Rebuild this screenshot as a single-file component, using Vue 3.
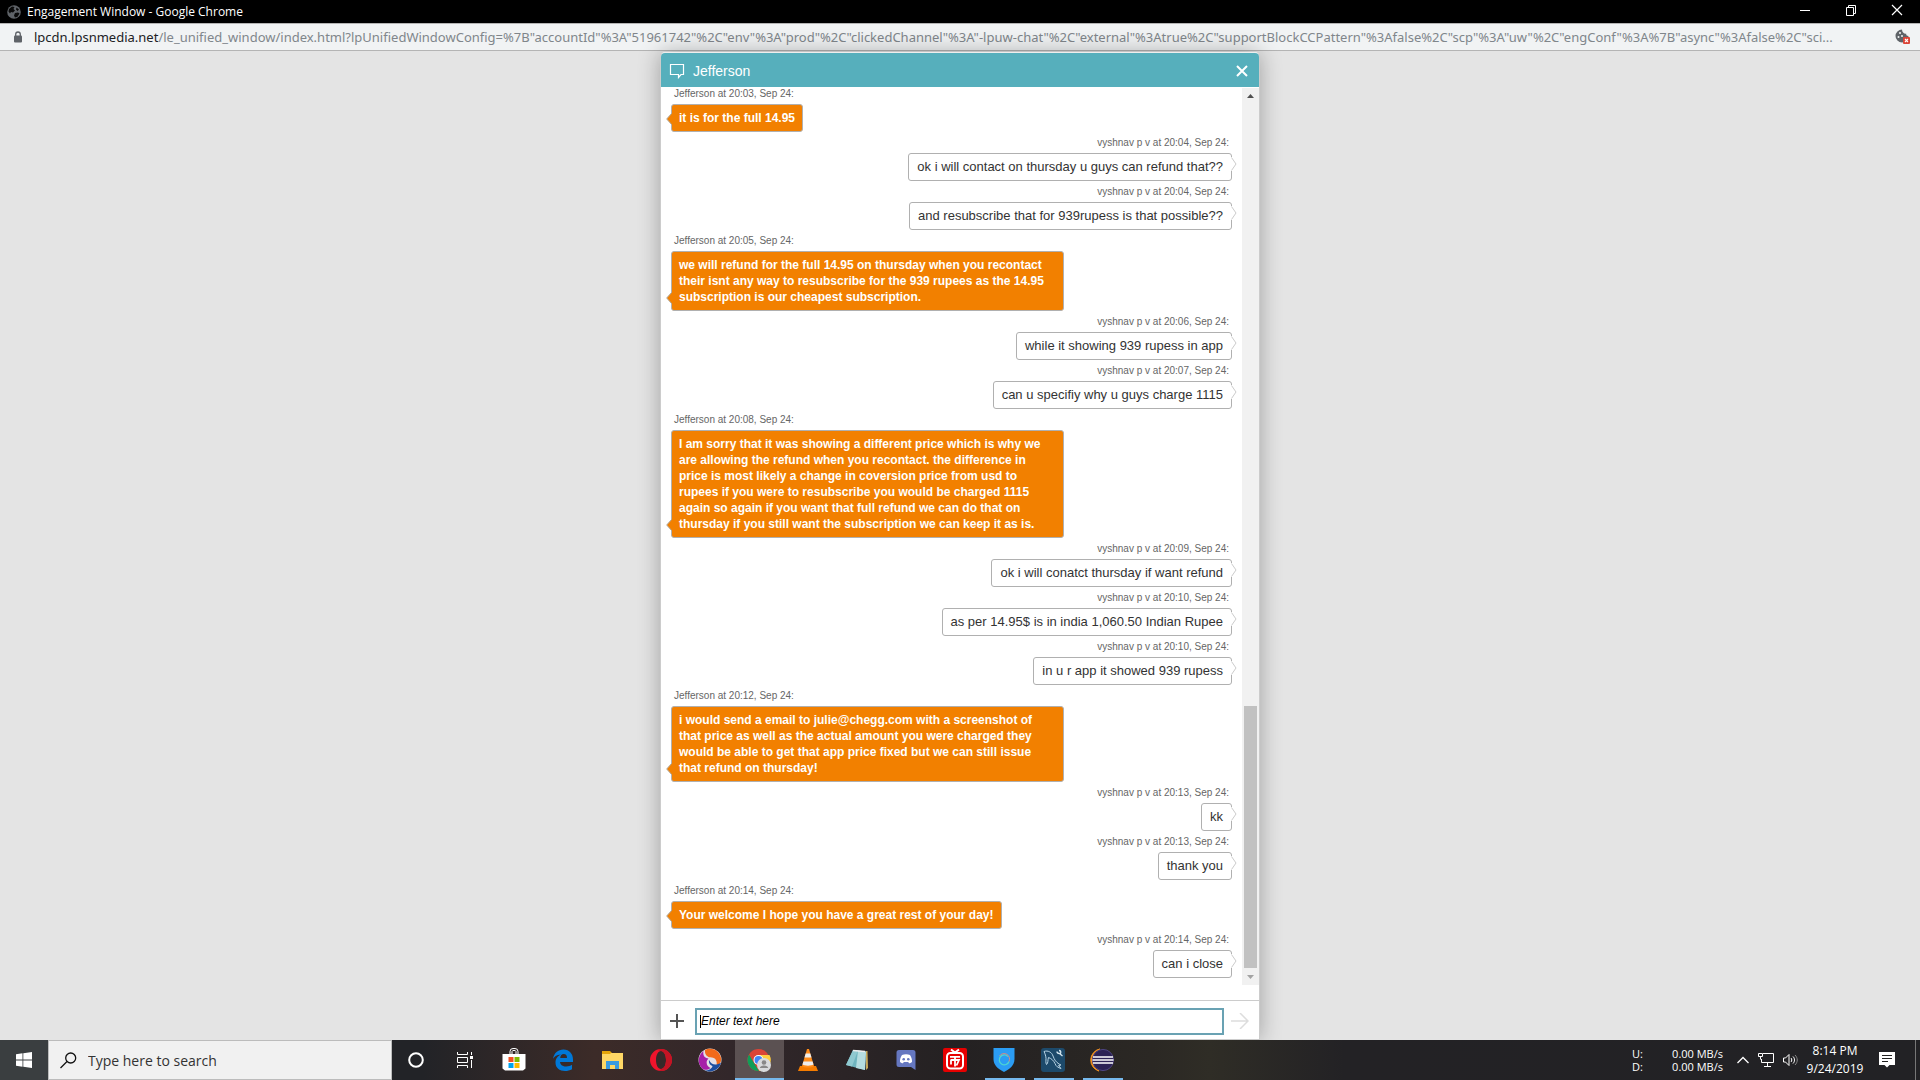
<script setup>
import { ref } from 'vue'

const draft = ref('')

const messages = [
  { from: 'agent', time: '20:03', text: 'it is for the full 14.95' },
  { from: 'visitor', time: '20:04', text: 'ok i will contact on thursday u guys can refund that??' },
  { from: 'visitor', time: '20:04', text: 'and resubscribe that for 939rupess is that possible??' },
  { from: 'agent', time: '20:05', text: 'we will refund for the full 14.95 on thursday when you recontact their isnt any way to resubscribe for the 939 rupees as the 14.95 subscription is our cheapest subscription.' },
  { from: 'visitor', time: '20:06', text: 'while it showing 939 rupess in app' },
  { from: 'visitor', time: '20:07', text: 'can u specifiy why u guys charge 1115' },
  { from: 'agent', time: '20:08', text: 'I am sorry that it was showing a different price which is why we are allowing the refund when you recontact. the difference in price is most likely a change in coversion price from usd to rupees if you were to resubscribe you would be charged 1115 again so again if you want that full refund we can do that on thursday if you still want the subscription we can keep it as is.' },
  { from: 'visitor', time: '20:09', text: 'ok i will conatct thursday if want refund' },
  { from: 'visitor', time: '20:10', text: 'as per 14.95$ is in india 1,060.50 Indian Rupee' },
  { from: 'visitor', time: '20:10', text: 'in u r app it showed 939 rupess' },
  { from: 'agent', time: '20:12', text: 'i would send a email to julie@chegg.com with a screenshot of that price as well as the actual amount you were charged they would be able to get that app price fixed but we can still issue that refund on thursday!' },
  { from: 'visitor', time: '20:13', text: 'kk' },
  { from: 'visitor', time: '20:13', text: 'thank you' },
  { from: 'agent', time: '20:14', text: 'Your welcome I hope you have a great rest of your day!' },
  { from: 'visitor', time: '20:14', text: 'can i close' },
]
const names = { agent: 'Jefferson', visitor: 'vyshnav p v' }
const urlPath = '/le_unified_window/index.html?lpUnifiedWindowConfig=%7B"accountId"%3A"51961742"%2C"env"%3A"prod"%2C"clickedChannel"%3A"-lpuw-chat"%2C"external"%3Atrue%2C"supportBlockCCPattern"%3Afalse%2C"scp"%3A"uw"%2C"engConf"%3A%7B"async"%3Afalse%2C"sci...'
</script>

<template>
  <div class="screen">
    <header class="titlebar">
      <svg class="globe" width="14" height="14" viewBox="0 0 14 14">
        <circle cx="7" cy="7" r="6.8" fill="#5f6368" />
        <path d="M2 4 5 1.600l2.500.400L6.500 4 8 5.500 6 7.500 4 7l-1 1.500L1.500 6.500zM8 8l3-.500 1.500 1-2 3.300-2.500.700-1-2zM9.500 2.500 12 4.500 10.500 6 9 4.500z" fill="#0a0a0a" />
      </svg>
      <h1 class="window-title">Engagement Window - Google Chrome</h1>
      <button class="win-btn" aria-label="Minimize"><svg width="12" height="12"><path d="M1 6.500h10" stroke="#fff" /></svg></button>
      <button class="win-btn" aria-label="Restore"><svg width="12" height="12"><path d="M1.500 3.500h7v8h-7zM3.500 3.500v-2h7v8h-2" fill="none" stroke="#fff" /></svg></button>
      <button class="win-btn" aria-label="Close window"><svg width="12" height="12"><path d="M1 1l10 10M11 1 1 11" stroke="#fff" stroke-width="1.200" /></svg></button>
    </header>

    <div class="urlbar">
      <svg class="lock" width="10" height="12" viewBox="0 0 10 12"><path d="M2.700 5V3.300a2.300 2.300 0 0 1 4.600 0V5" fill="none" stroke="#5f6368" stroke-width="1.300" /><rect x="1" y="4.500" width="8" height="7" rx="1" fill="#5f6368" /></svg>
      <p class="url"><span class="host">lpcdn.lpsnmedia.net</span>{{ urlPath }}</p>
      <button class="cookie" aria-label="Cookies blocked">
        <svg width="16" height="16" viewBox="0 0 16 16">
          <path d="M7 .500a6.500 6.500 0 1 0 6.500 6.500c-1.500 0-2.500-1-2.300-2.300C9 5 7 3 7 .500z" fill="#5f6368" />
          <g fill="#f1f3f4"><circle cx="5" cy="4" r="1" /><circle cx="3.500" cy="8" r="1" /><circle cx="7" cy="7" r="1" /></g>
          <rect x="8" y="8" width="7" height="7" rx="1" fill="#db4437" /><path d="m10 10 3 3M13 10l-3 3" stroke="#fff" stroke-width="1.100" />
        </svg>
      </button>
    </div>

    <main class="page">
      <section class="chat">
        <header class="chat-head">
          <svg width="16" height="16" viewBox="0 0 16 16"><path d="M1.500 1.500h13v10H12L9.500 14.500V11.500h-8z" fill="none" stroke="#fff" stroke-width="1.200" /></svg>
          <h2>Jefferson</h2>
          <button aria-label="Close chat"><svg width="12" height="12"><path d="M1 1l10 10M11 1 1 11" stroke="#fff" stroke-width="2" /></svg></button>
        </header>
        <div class="transcript">
          <ol class="messages">
            <li v-for="(m, i) in messages" :key="i" :class="m.from">
              <p class="meta">{{ names[m.from] }} at {{ m.time }}, Sep 24:</p>
              <div class="bubble">
                {{ m.text }}
                <svg v-if="m.from === 'agent'" class="tail" width="6" height="12" viewBox="0 0 6 12"><path d="M6 0 .700 6 6 12" fill="#f28000" stroke="#b0a89c" /></svg>
                <svg v-else class="tail" width="6" height="14" viewBox="0 0 6 14"><path d="M0 0h1l4 7-4 7H0z" fill="#fff" /><path d="M.500.500 5 7 .500 13.500" fill="none" stroke="#ccc" /></svg>
              </div>
            </li>
          </ol>
          <div class="scrollbar">
            <svg width="17" height="17"><path d="M5 10h7L8.500 6z" fill="#505050" /></svg>
            <div class="thumb"></div>
            <svg width="17" height="17"><path d="M5 7h7l-3.500 4z" fill="#a3a3a3" /></svg>
          </div>
        </div>
        <form class="composer" @submit.prevent>
          <button type="button" aria-label="Add"><svg width="14" height="14"><path d="M7 0v14M0 7h14" stroke="#555" stroke-width="2" /></svg></button>
          <div class="field"><input v-model="draft" type="text" aria-label="Message" placeholder="Enter text here" /></div>
          <button type="submit" aria-label="Send"><svg width="18" height="16"><path d="M0 8h17M9 0l8 8-8 8" fill="none" stroke="#ddd" stroke-width="1.500" /></svg></button>
        </form>
      </section>
    </main>

    <footer class="taskbar">
      <button class="start" aria-label="Start"><svg width="16" height="16" viewBox="0 0 16 16"><path d="M0 2.200 6.500 1.300v6.200H0zM7.300 1.200 16 0v7.500H7.300zM0 8.400h6.500v6.300L0 13.800zM7.300 8.400H16V16l-8.700-1.200z" fill="#fff" /></svg></button>
      <label class="search">
        <svg width="17" height="17" viewBox="0 0 17 17"><circle cx="10.700" cy="6" r="5" fill="none" stroke="#111" stroke-width="1.300" /><path d="M7 9.500.500 16" stroke="#111" stroke-width="1.300" /></svg>
        <input type="text" placeholder="Type here to search" aria-label="Search" />
      </label>
      <nav class="apps">
        <button aria-label="Cortana"><svg width="24" height="24"><circle cx="12" cy="12" r="6.800" fill="none" stroke="#fff" stroke-width="2" /></svg></button>
        <button aria-label="Task view"><svg width="24" height="24" fill="none" stroke="#fff"><path d="M4.500 4v2.500h10V4M4.500 20v-2.500h10V20M4.500 9.500h10v5h-10zM18.500 4v3M18.500 12v8" /><path d="M17 8h3v3h-3z" fill="#fff" stroke="none" /></svg></button>
        <button aria-label="Store"><svg width="24" height="24"><path d="M8 6V3.500a3 3 0 0 1 3-3h2a3 3 0 0 1 3 3V6M10 6V3.500c0-1.500 4-1.500 4 0V6" fill="none" stroke="#fff" /><path d="M.500 6h23v14.500l-2.500 2H3l-2.500-2z" fill="#fff" /><path d="M6.500 9h5v5h-5z" fill="#f25022" /><path d="M12.500 9h5v5h-5z" fill="#7fba00" /><path d="M6.500 15h5v5h-5z" fill="#00a4ef" /><path d="M12.500 15h5v5h-5z" fill="#ffb900" /></svg></button>
        <button aria-label="Edge"><svg width="24" height="24"><path d="M2 11C3 5 7 1.500 12.500 1.500 18.500 1.500 22 6 22 11.500V14H9c.300 3 3 4.500 6 4.500 2.500 0 4.500-.700 6-1.700v4.400c-2 1.200-4.500 1.800-7 1.800-5.500 0-9.500-3-9.500-8.500 0-4 2.500-6.700 5.500-8C5.500 6.700 3 9 2 11zm7.200-1H16c0-2.500-1-4-3.300-4-2 0-3.200 1.500-3.500 4z" fill="#0078d7" fill-rule="evenodd" /></svg></button>
        <button aria-label="File Explorer"><svg width="24" height="24"><path d="M2 3h8l2 2h11v6H2z" fill="#e5a50a" /><path d="M2 6h8l1-1h12v16H2z" fill="#ffd765" /><path d="M6 21v-8h13v8h-4v-4h-5v4z" fill="#3a9be0" /></svg></button>
        <button aria-label="Opera"><svg width="24" height="24"><path d="M12 1a11 11 0 1 0 0 22 11 11 0 0 0 0-22zm0 2c3 0 5 4 5 9s-2 9-5 9-5-4-5-9 2-9 5-9z" fill="#f0142c" fill-rule="evenodd" /><path d="M12 1a11 11 0 0 1 0 22c-1.300 0-2.500-.200-3.500-.700 1 .500 2.200.700 3.500-1.300 3-.500 5-4 5-9s-2-8.500-5-9c-1.300 0-2.500-.800-3.500-1.300 1-.500 2.200-.700 3.500-.700z" fill="#c41424" /></svg></button>
        <button aria-label="Media browser"><svg width="24" height="24"><circle cx="12" cy="12" r="11.500" fill="#e4dfe6" /><path d="M7 2C12-.800 22 1 23.300 11.500c-.300 3.500-2.300 5.500-4.800 6C19.500 12 17 9.500 12.500 9.300 9.500 9.300 6.500 6.500 7 2z" fill="#f26a1b" /><path d="M5.500 3C4.500 8 7 10.300 10.500 10.500c-3.300 3-2 8 2 9.500-2.500 2.500-6.500 2-8.500.500A11.700 11.700 0 0 1 5.500 3z" fill="#a61fa8" /><path d="M23 14.500c-1.500 7-9 11-16.500 8 4.500 0 7.500-2 8-4.500-2.700-1-4-3-3.500-6 2.500 5 7 6 12 2.500z" fill="#1c4ea0" /></svg></button>
        <button class="open active" aria-label="Chrome"><svg width="24" height="24"><circle cx="11.500" cy="12" r="11" fill="#db4437" /><path d="M2 6.500 7 15l5 8A11 11 0 0 1 2 6.500z" fill="#0f9d58" /><path d="M12 7h10.500A11 11 0 0 1 12 23l5-9z" fill="#ffcd40" /><circle cx="11.500" cy="12" r="5" fill="#fff" /><circle cx="11.500" cy="12" r="4" fill="#4285f4" /><circle cx="17" cy="17" r="7" fill="#d8dadc" /><circle cx="17" cy="14.500" r="2.300" fill="#888" /><path d="M12.800 20c0-3.500 8.400-3.500 8.400 0z" fill="#888" /></svg></button>
        <button aria-label="VLC"><svg width="24" height="24"><path d="M4 18h16l2 5H2z" fill="#f57c00" /><path d="M11 1h2l5 17c-2 2-10 2-12 0z" fill="#ff8c1a" /><path d="M9.700 5.500h4.600l1.200 4H8.500zM7.400 13.500h9.200l.900 3c-2 1.500-9 1.500-11 0z" fill="#eee" /></svg></button>
        <button aria-label="Notepad"><svg width="24" height="24"><path d="M21 3h1.500L23 20l-2 2z" fill="#c9a95a" /><path d="M8 2 21 3.500 20 22 1 17z" fill="#6fb5bf" /><path d="M13 2.500l8 1L20 22l-9-2z" fill="#b5dde0" /><path d="M8 2l5 .500L7 18.500 1 17z" fill="#8fc9d0" /><path d="M8 2.500l12 1" stroke="#eee" stroke-width="1.500" /></svg></button>
        <button aria-label="Discord"><svg width="24" height="24"><path d="M5 2h14a2.500 2.500 0 0 1 2.500 2.500V22L17 19H5a2.500 2.500 0 0 1-2.500-2.500v-12A2.500 2.500 0 0 1 5 2z" fill="#6577c0" /><path d="M8 7c2.500-1 5.500-1 8 0 1.500 2 2.200 5 2 7-1 1-2 1.300-3 1.300l-.800-1.300H9.800L9 15.300c-1 0-2-.300-3-1.300-.200-2 .500-5 2-7z" fill="#fff" /><circle cx="9.700" cy="11.300" r="1.300" fill="#6577c0" /><circle cx="14.300" cy="11.300" r="1.300" fill="#6577c0" /></svg></button>
        <button aria-label="TV player"><svg width="24" height="24"><rect width="24" height="24" rx="2" fill="#e60000" /><path d="m8 1.500 4 3 4-3" fill="none" stroke="#fff" stroke-width="2" /><rect x="4" y="5" width="16" height="15.500" rx="3.500" fill="none" stroke="#fff" stroke-width="2" /><path d="M7 8.800h10M7.500 12h8.500l-2.500 5.500M8 12v4.500M12 9v9.500" fill="none" stroke="#fff" stroke-width="1.800" /></svg></button>
        <button class="open" aria-label="VPN"><svg width="24" height="24"><path d="M1.500 0h21v11c0 6-4.500 10-10.500 13C6 21 1.500 17 1.500 11z" fill="#2b9df4" /><path d="M16 8.500a5 5 0 1 0 1 5" fill="none" stroke="#4fd6d0" stroke-width="1.300" /><path d="M17 13.500a5.500 5.500 0 0 0-9.500-5.500" fill="none" stroke="#d98a84" /></svg></button>
        <button class="open" aria-label="MySQL Workbench"><svg width="24" height="24"><rect width="24" height="24" rx="3" fill="#1d4a6b" /><path d="M3 3.500c4-1.500 8 1 9 4.500 1.500 4 3 6 6 8l2 1-2.500.500 2.500 3c-3-1-5-2-6-5-1.500-3-3.500-5-6.500-6-1 3 0 5-2 7-1-1.500-.500-4-.500-6s-1-5-2-7z" fill="none" stroke="#b7d3e4" /><path d="M16 3.500c0 1.500 1.500 2 2.500 2l3 2.500M18 2.500c2 0 2 1.500 1.500 3" fill="none" stroke="#d5e6f0" stroke-width="1.300" /></svg></button>
        <button class="open" aria-label="Eclipse"><svg width="24" height="24"><path d="M10 1A11.300 11.300 0 0 0 9 23 12 12 0 0 1 10 1z" fill="#f7941e" stroke="#f7941e" /><circle cx="13" cy="12" r="10.600" fill="#2c2255" stroke="#4d4480" /><path d="M3 9h20M2.500 12h21M3 15h20" stroke="#fff" stroke-width="1.600" /></svg></button>
      </nav>
      <div class="tray">
        <dl class="net">
          <dt>U:</dt><dd>0.00 MB/s</dd>
          <dt>D:</dt><dd>0.00 MB/s</dd>
        </dl>
        <button aria-label="Hidden icons"><svg width="12" height="8"><path d="m.500 7 5.500-5.500L11.500 7" fill="none" stroke="#fff" stroke-width="1.300" /></svg></button>
        <button aria-label="Network"><svg width="16" height="14" fill="none" stroke="#fff"><path d="M5 .500h10.500v9H3.500V6M9.500 9.500v3.500M6 13.500h7" /><path d="M.500.500h4v3h-4zM2.500 3.500v3" /></svg></button>
        <button aria-label="Volume"><svg width="17" height="14" fill="none" stroke="#fff"><path d="M.500 5h2L6 1.500v11L2.500 9h-2zM8 5c1 1 1 3 0 4M10 3.500c2 2 2 5 0 7" /><path d="M12 2c3 3 3 7 0 10" stroke="#888" /></svg></button>
        <p class="clock"><time>8:14 PM</time><time>9/24/2019</time></p>
        <button class="notify" aria-label="Notifications"><svg width="16" height="16"><path d="M0 0h16v13h-5.500L8 15.500 5.500 13H0z" fill="#fff" /><path d="M3 3.500h10M3 6.500h10M3 9.500h6" stroke="#222" /></svg></button>
        <span class="peek"></span>
      </div>
    </footer>
  </div>
</template>

<style>
body { margin: 0; }
</style>

<style scoped>
* { box-sizing: border-box; margin: 0; padding: 0; }
button { border: 0; background: none; display: flex; align-items: center; justify-content: center; flex: none; }
svg { display: block; flex: none; }
.screen { height: 100vh; display: flex; flex-direction: column; overflow: hidden; background: #e4e4e4; font-family: "Open Sans", sans-serif; }

.titlebar { flex: none; height: 23px; display: flex; align-items: center; background: #000; padding-left: 7px; }
.window-title { flex: 1; margin-left: 6px; color: #fff; font-size: 12px; line-height: 16px; font-weight: 400; }
.win-btn { width: 46px; height: 20px; align-self: flex-start; }

.urlbar { flex: none; height: 28px; display: flex; align-items: center; padding: 0 9px 0 13px; background: #f1f3f4; border: solid #b4b4b4; border-width: 1px 0; }
.url { flex: 1; min-width: 0; margin-left: 11px; overflow: hidden; white-space: nowrap; font: 13px/20px "Noto Sans", sans-serif; color: #80868b; }
.host { color: #202124; }

.page { flex: 1; min-height: 0; display: flex; justify-content: center; padding-top: 1px; }
.chat { width: 600px; display: flex; flex-direction: column; background: #fff; border: 1px solid #ccc; border-top-color: #eee; border-radius: 5px 5px 0 0; box-shadow: 0 0 22px rgba(0, 0, 0, 0.3); font-family: "Liberation Sans", Arial, sans-serif; }
.chat-head { flex: none; height: 34px; display: flex; align-items: center; padding: 1px 11px 0 8px; background: #56afbc; border-radius: 4px 4px 0 0; color: #fff; }
.chat-head h2 { flex: 1; margin-left: 8px; font-size: 14px; font-weight: 400; line-height: 20px; }
.transcript { flex: 1; min-height: 0; display: flex; padding-bottom: 15px; }
.messages { flex: 1; overflow: hidden; list-style: none; padding: 0 10px; }
.messages li { display: flex; flex-direction: column; align-items: flex-start; margin-bottom: 4px; }
.messages .visitor { align-items: flex-end; }
.meta { padding: 0 3px 4px; font-size: 10px; line-height: 13px; color: #666; }
.bubble { position: relative; max-width: 393px; padding: 5px 7px; border: 1px solid #b0b0b0; border-radius: 3px; font-size: 12px; line-height: 16px; color: #333; }
.agent .bubble { background: #f28000; color: #fff; font-weight: 700; }
.visitor .bubble { padding: 5px 8px; background: #fff; font-size: 13px; }
.tail { position: absolute; }
.agent .tail { left: -6px; bottom: 6px; }
.visitor .tail { right: -6px; bottom: 9px; }
.scrollbar { width: 17px; margin-top: 1px; display: flex; flex-direction: column; align-items: center; background: #f1f1f1; }
.thumb { width: 13px; height: 262px; margin-top: auto; background: #c1c1c1; }
.composer { flex: none; height: 39px; display: flex; align-items: center; gap: 11px; padding: 2px 10px 0 9px; border-top: 1px solid #ccc; }
.composer [type="submit"] { margin-left: -4px; }
.field { position: relative; flex: 1; }
.field::before { content: ""; position: absolute; left: 5px; top: 7px; width: 1px; height: 13px; background: #000; }
.field input { display: block; width: 100%; height: 27px; padding: 0 4px; border: 2px solid #69a2b3; background: #fff; font: italic 12px/16px "Liberation Sans", Arial, sans-serif; color: #000; outline: 0; }
.field input::placeholder { color: #000; }

.taskbar { flex: none; height: 40px; display: flex; background: linear-gradient(90deg, #222327 0%, #222327 22%, #3c2b28 31%, #32272a 38%, #242122 50%, #2b2824 60%, #2f2d26 63%, #232225 70%, #222225 100%); color: #fff; }
.start { width: 48px; background: #3a3e40; }
.search { width: 344px; display: flex; align-items: center; padding-left: 11px; background: #f1f1f1; border: 1px solid #bcbcbc; }
.search input { flex: 1; min-width: 0; margin-left: 11px; padding-top: 2px; border: 0; background: none; outline: 0; font: 14px/20px "Open Sans", sans-serif; color: #333; }
.search input::placeholder { color: #333; opacity: 1; }
.apps { display: flex; }
.apps button { width: 49px; position: relative; padding-right: 1px; }
.apps .active { background: #5b5152; }
.open::after { content: ""; position: absolute; left: 5px; right: 4px; bottom: 0; height: 2px; background: #76b9ed; }
.active::after { left: 0; right: 0; }
.tray { margin-left: auto; display: flex; align-items: center; }
.net { display: grid; grid-template-columns: 40px auto; font-size: 11px; line-height: 13px; margin-right: 14px; text-align: left; }
.tray button { margin-right: 9px; height: 40px; }
.clock { width: 60px; margin: 0 14px 0 -4px; font-size: 12px; line-height: 18px; text-align: center; }
.clock time { display: block; }
.tray .notify { margin-right: 20px; }
.peek { width: 5px; height: 40px; border-left: 1px solid #777; }
</style>
